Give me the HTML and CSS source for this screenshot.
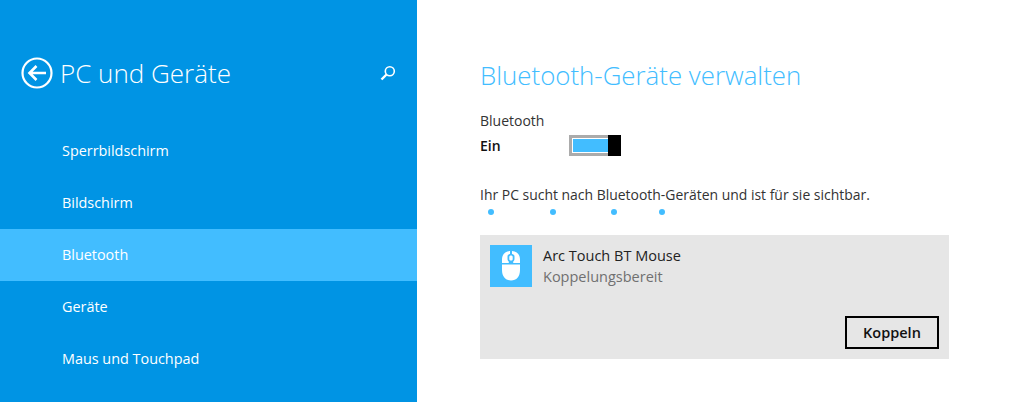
FILE: index.html
```html
<!DOCTYPE html>
<html lang="de">
<head>
<meta charset="utf-8">
<title>PC und Geräte</title>
<link rel="stylesheet" href="styles.css">
</head>
<body>
<div class="page">
  <aside class="sidebar">
    <header class="side-head">
      <svg class="back" width="32" height="32" viewBox="0 0 32 32" fill="none" stroke="#fff">
        <circle cx="16" cy="16" r="14.5" stroke-width="2.2"/>
        <path d="M25 16H9M15.5 9L8.5 16L15.500 23" stroke-width="2.6"/>
      </svg>
      <h1 class="side-title">PC und Geräte</h1>
      <svg class="search" width="16" height="16" viewBox="0 0 16 16" fill="none" stroke="#fff">
        <circle cx="9.8" cy="6.2" r="4.5" stroke-width="1.6"/>
        <path d="M6.5 9.5L1.5 14.5" stroke-width="2.4"/>
      </svg>
    </header>
    <nav class="nav">
      <a class="nav-item">Sperrbildschirm</a>
      <a class="nav-item">Bildschirm</a>
      <a class="nav-item active">Bluetooth</a>
      <a class="nav-item">Geräte</a>
      <a class="nav-item">Maus und Touchpad</a>
    </nav>
  </aside>
  <main class="main">
    <h2 class="main-title">Bluetooth-Geräte verwalten</h2>
    <div class="setting-label">Bluetooth</div>
    <div class="toggle-row">
      <span class="toggle-state">Ein</span>
      <span class="toggle"><span class="toggle-fill"></span><span class="toggle-thumb"></span></span>
    </div>
    <p class="status">Ihr PC sucht nach Bluetooth-Geräten und ist für sie sichtbar.</p>
    <div class="dots"><i class="dot d1"></i><i class="dot d2"></i><i class="dot d3"></i><i class="dot"></i></div>
    <section class="device">
      <div class="device-info">
        <span class="device-icon">
          <svg width="24" height="32" viewBox="0 0 24 32" fill="#fff">
            <path d="M11 1C6 1.300 3 4.500 3 9.500V13H9.800V11.500C8.800 10.800 8.500 9.800 8.500 8.500V6.500C8.500 5.200 9.400 4.300 11 4.100ZM13 1V4.100C14.600 4.300 15.500 5.200 15.500 6.500V8.500C15.500 9.800 15.200 10.800 14.200 11.500V13H21V9.500C21 4.500 18 1.300 13 1ZM12 5.500C11 5.500 10.300 6 10.300 7V9C10.300 10 11 10.500 12 10.500C13 10.500 13.700 10 13.700 9V7C13.700 6 13 5.500 12 5.500ZM3 14.500V20C3 26.500 6.500 30.500 12 30.500C17.500 30.500 21 26.500 21 20V14.500Z"/>
          </svg>
        </span>
        <div class="device-text">
          <div class="device-name">Arc Touch BT Mouse</div>
          <div class="device-sub">Koppelungsbereit</div>
        </div>
      </div>
      <div class="device-actions"><button class="btn">Koppeln</button></div>
    </section>
  </main>
</div>
</body>
</html>
```
FILE: styles.css
```css
* { box-sizing: border-box; }
html, body { margin: 0; height: 100%; overflow: hidden; }
body { font-family: "Open Sans", "Noto Sans", sans-serif; background: #fff; color: #222; }
.page { display: flex; width: 1024px; height: 402px; }

.sidebar { width: 417px; flex: none; background: #0094e4; color: #fff; display: flex; flex-direction: column; }
.side-head { height: 125px; display: flex; align-items: center; padding: 21px 21px 0 21px; }
.back { flex: none; }
.side-title { margin: 0 0 0 7px; font-size: 26px; font-weight: 300; line-height: 36px; flex: 1; white-space: nowrap; }
.search { flex: none; margin-top: -1px; }
.nav { display: flex; flex-direction: column; }
.nav-item { height: 52px; display: flex; align-items: center; padding: 0 0 1px 62px; font-size: 14.4px; color: #fff; }
.nav-item.active { background: #42bdff; }

.main { flex: 1; padding: 58px 0 0 63px; min-width: 0; }
.main-title { margin: 0; font-size: 25.85px; font-weight: 300; line-height: 34px; color: #42bdff; }
.setting-label { margin-top: 19px; font-size: 14px; line-height: 20px; color: #333; }
.toggle-row { display: flex; align-items: center; height: 22px; margin-top: 3px; }
.toggle-state { width: 89px; font-size: 14px; font-weight: 600; color: #111; }
.toggle { display: flex; width: 52px; height: 21px; border: 3px solid #ababab; border-right: none; background: #fff; }
.toggle-fill { flex: 1; background: #42bdff; margin: 1px 0 1px 1px; }
.toggle-thumb { width: 13px; margin: -3px 0; background: #000; }
.status { margin: 29px 0 0; font-size: 13.95px; line-height: 20px; color: #333; white-space: nowrap; }
.dots { display: flex; margin: 4px 0 0 8px; height: 6px; }
.dot { width: 6px; height: 6px; border-radius: 50%; background: #42bdff; flex: none; }
.d1 { margin-right: 56px; }
.d2 { margin-right: 55px; }
.d3 { margin-right: 42px; }
.device { width: 469px; height: 124px; margin-top: 20px; background: #e6e6e6; padding: 10px; display: flex; flex-direction: column; justify-content: space-between; }
.device-info { display: flex; }
.device-icon { width: 42px; height: 42px; background: #42bdff; display: flex; align-items: center; justify-content: center; flex: none; }
.device-text { margin-left: 11px; }
.device-name { font-size: 14.5px; line-height: 22px; color: #222; }
.device-sub { font-size: 14.5px; line-height: 20px; color: #707070; }
.device-actions { display: flex; justify-content: flex-end; }
.btn { width: 94px; height: 33px; border: 2px solid #000; background: transparent; font: 600 14.5px "Open Sans", "Noto Sans", sans-serif; color: #111; padding: 0; }
```
